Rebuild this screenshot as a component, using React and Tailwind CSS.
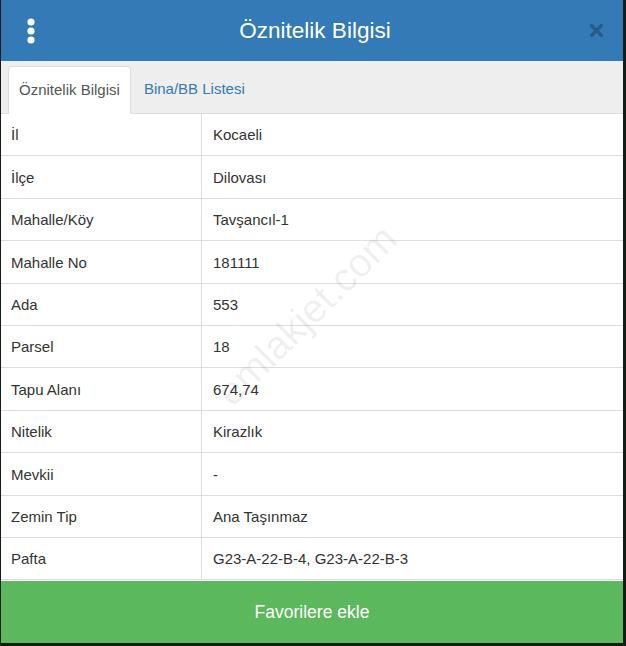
import { X } from 'lucide-react';

const rows = [
  ['İl', 'Kocaeli'],
  ['İlçe', 'Dilovası'],
  ['Mahalle/Köy', 'Tavşancıl-1'],
  ['Mahalle No', '181111'],
  ['Ada', '553'],
  ['Parsel', '18'],
  ['Tapu Alanı', '674,74'],
  ['Nitelik', 'Kirazlık'],
  ['Mevkii', '-'],
  ['Zemin Tip', 'Ana Taşınmaz'],
  ['Pafta', 'G23-A-22-B-4, G23-A-22-B-3'],
];

function KebabIcon() {
  return (
    <svg width="8" height="26" viewBox="0 0 8 26" className="text-white">
      <circle cx="4" cy="4" r="3.6" fill="currentColor" />
      <circle cx="4" cy="13" r="3.6" fill="currentColor" />
      <circle cx="4" cy="22" r="3.6" fill="currentColor" />
    </svg>
  );
}

export default function App() {
  return (
    <div className="h-[646px] w-[626px] bg-[#141a14] pl-px pr-[3px] pb-[3px] font-['Liberation_Sans',Arial,sans-serif]">
      <div className="relative flex h-full flex-col overflow-hidden bg-white">
        {/* Header */}
        <div className="flex h-[61px] shrink-0 items-center bg-[#337ab7] pl-[26px] pr-[17px]">
          <KebabIcon />
          <div className="flex-1 pl-[8px] text-center text-[22.5px] text-white">Öznitelik Bilgisi</div>
          <X size={19} strokeWidth={4.5} className="text-[#2a5a86]" />
        </div>

        {/* Tabs */}
        <div className="flex h-[53px] shrink-0 items-end border-b border-[#ddd] bg-[#eeeeee] pl-[7px]">
          <div className="-mb-px flex h-[48px] items-center rounded-t border border-b-0 border-[#ddd] bg-white px-[10px] text-[15px] text-[#555]">
            Öznitelik Bilgisi
          </div>
          <div className="flex h-[48px] items-center px-[13px] text-[15px] text-[#337ab7]">
            Bina/BB Listesi
          </div>
        </div>

        {/* Attribute table */}
        <div className="flex-1">
          {rows.map(([label, value]) => (
            <div key={label} className="flex h-[42.4px] border-b border-[#ddd] pt-[2px] text-[15px] text-[#333]">
              <div className="-mt-[2px] flex w-[201px] shrink-0 items-center border-r border-[#ddd] pl-[10px] pt-[2px]">{label}</div>
              <div className="flex flex-1 items-center pl-[11px]">{value}</div>
            </div>
          ))}
        </div>

        <button className="flex h-[62px] shrink-0 items-center justify-center bg-[#5cb85c] text-[17.5px] text-white">
          Favorilere ekle
        </button>

        {/* Watermark */}
        <div className="pointer-events-none absolute left-[305px] top-[315px] -translate-x-1/2 -translate-y-1/2 -rotate-45 text-[40px] text-black/[0.07]">
          emlakjet.com
        </div>
      </div>
    </div>
  );
}
